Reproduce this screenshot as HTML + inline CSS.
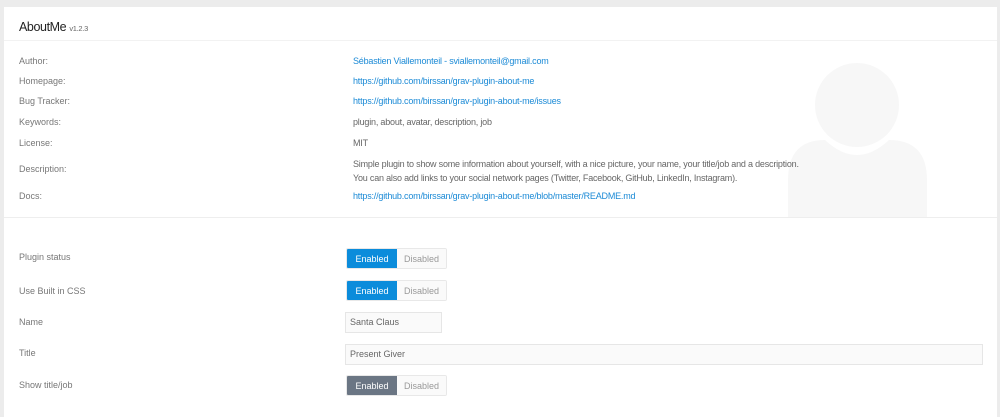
<!DOCTYPE html>
<html><head><style>
body{margin:0;width:1000px;height:410px;background:#ececec;font-family:"Liberation Sans",sans-serif;overflow:hidden;position:relative}
.card{position:absolute;left:4px;top:7px;width:993px;height:410px;background:#fff}
.abs{position:absolute;white-space:nowrap}
.l{left:19px;font-size:9px;color:#777}
.v{left:353px;font-size:9px;color:#666;letter-spacing:-0.2px}
a{color:#1b8ad6;text-decoration:none}
.tog{position:absolute;left:346px;width:101px;height:21px;border:1px solid #e8e8e8;box-sizing:border-box;font-size:9px;display:flex;border-radius:2px;overflow:hidden}
.tog span{flex:1;display:flex;align-items:center;justify-content:center;color:#999;background:#fafafa}
.tog span.on{background:#0b8cdb;color:#fff;flex:0 0 50px}
.tog span.gr{background:#6b7684;color:#fff;flex:0 0 50px}
.inp{position:absolute;left:345px;height:21px;border:1px solid #e6e6e6;box-sizing:border-box;background:#fafafa;font-size:9px;color:#666;padding-left:4px;line-height:19px}
</style></head><body>
<div class="card"></div>
<div class="abs" style="left:19px;top:20px;font-size:12.5px;color:#222;letter-spacing:-0.4px">AboutMe <span style="font-size:7.5px;color:#666;letter-spacing:-0.3px">v1.2.3</span></div>
<div class="abs" style="left:4px;top:40px;width:993px;height:1px;background:#f2f2f2"></div>
<svg class="abs" style="left:780px;top:60px" width="160" height="158"><circle cx="77" cy="45" r="42" fill="#f7f7f7"/><path d="M8 157 L8 120 Q8 80 45 80 Q77 110 109 80 Q147 80 147 120 L147 157 Z" fill="#f7f7f7"/></svg>
<div class="abs l" style="top:56px">Author:</div><div class="abs v" style="top:56px"><a>Sébastien Viallemonteil - sviallemonteil@gmail.com</a></div>
<div class="abs l" style="top:76px">Homepage:</div><div class="abs v" style="top:76px"><a>https://github.com/birssan/grav-plugin-about-me</a></div>
<div class="abs l" style="top:96px">Bug Tracker:</div><div class="abs v" style="top:96px"><a>https://github.com/birssan/grav-plugin-about-me/issues</a></div>
<div class="abs l" style="top:117px">Keywords:</div><div class="abs v" style="top:117px">plugin, about, avatar, description, job</div>
<div class="abs l" style="top:138px">License:</div><div class="abs v" style="top:138px">MIT</div>
<div class="abs l" style="top:164px">Description:</div><div class="abs v" style="top:157px;line-height:14px">Simple plugin to show some information about yourself, with a nice picture, your name, your title/job and a description.<br>You can also add links to your social network pages (Twitter, Facebook, GitHub, LinkedIn, Instagram).</div>
<div class="abs l" style="top:191px">Docs:</div><div class="abs v" style="top:191px"><a>https://github.com/birssan/grav-plugin-about-me/blob/master/README.md</a></div>
<div class="abs" style="left:4px;top:217px;width:993px;height:1px;background:#eee"></div>
<div class="abs l" style="top:252px">Plugin status</div>
<div class="tog" style="top:248px"><span class="on">Enabled</span><span>Disabled</span></div>
<div class="abs l" style="top:286px">Use Built in CSS</div>
<div class="tog" style="top:280px"><span class="on">Enabled</span><span>Disabled</span></div>
<div class="abs l" style="top:317px">Name</div>
<div class="inp" style="top:312px;width:97px">Santa Claus</div>
<div class="abs l" style="top:348px">Title</div>
<div class="inp" style="top:344px;width:638px">Present Giver</div>
<div class="abs l" style="top:380px">Show title/job</div>
<div class="tog" style="top:375px"><span class="gr">Enabled</span><span>Disabled</span></div>
</body></html>
